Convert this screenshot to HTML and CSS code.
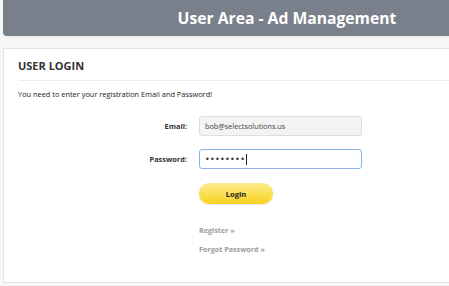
FILE: index.html
```html
<!DOCTYPE html>
<html lang="en">
<head>
  <meta charset="UTF-8">
  <title>User Area - Ad Management</title>
  <link rel="stylesheet" href="styles.css">
</head>
<body>
  <div class="header">
    <h1 class="header__title">User Area - Ad Management</h1>
  </div>

  <div class="panel">
    <h2 class="panel__title">USER LOGIN</h2>
    <p class="panel__info">You need to enter your registration Email and Password!</p>

    <form class="login">
      <label class="login__label" for="email">Email:</label>
      <input class="login__input" id="email" type="text" value="bob@selectsolutions.us">

      <label class="login__label" for="password">Password:</label>
      <div class="login__input login__input--focus">
        <span class="login__dots">&bull;&bull;&bull;&bull;&bull;&bull;&bull;&bull;</span><span class="login__caret"></span>
      </div>

      <span></span>
      <div class="login__actions">
        <button type="button" class="login__button">Login</button>
        <a href="#" class="login__link login__link--first">Register &raquo;</a>
        <a href="#" class="login__link">Forgot Password &raquo;</a>
      </div>
    </form>
  </div>
</body>
</html>
```

FILE: styles.css
```css
html {
  box-sizing: border-box;
  background: #f7f7f7;
}

*, *:before, *:after {
  box-sizing: inherit;
}

body {
  margin: 0;
  font-family: 'Open Sans', 'Liberation Sans', sans-serif;
  color: #333;
  overflow: hidden;
}

.header {
  margin-left: 3px;
  height: 36px;
  background: #7a808b;
  border-bottom-left-radius: 4px;
  box-shadow: 0 1px 2px rgba(0,0,0,0.08);
  display: flex;
  align-items: center;
  justify-content: center;
  padding-left: 122px;
}

.header__title {
  margin: 0;
  color: #fff;
  font-size: 15.7px;
  font-weight: 700;
  white-space: nowrap;
}

.panel {
  margin: 12px -10px 0 3px;
  background: #fff;
  border: 1px solid #e4e4e4;
  padding: 9px 0 27px 14px;
  height: 235px;
}

.panel__title {
  margin: 0;
  font-size: 11px;
  line-height: 16px;
  font-weight: 700;
  color: #333;
  padding-bottom: 6px;
  border-bottom: 1px solid #ececec;
}

.panel__info {
  margin: 8px 0 0;
  font-size: 7.4px;
  line-height: 10px;
  color: #222;
}

.login {
  margin-top: 17px;
  display: grid;
  grid-template-columns: 169px 163px;
  column-gap: 12px;
  row-gap: 13px;
  align-items: center;
}

.login__label {
  text-align: right;
  font-size: 7.4px;
  font-weight: 700;
  color: #333;
}

.login__input {
  height: 20px;
  border: 1px solid #dedede;
  border-radius: 3px;
  background: #f3f3f3;
  padding: 0 5px;
  font-family: inherit;
  font-size: 7.3px;
  color: #444;
  outline: 0;
}

.login__input--focus {
  background: #fff;
  border-color: #8fb3e6;
  display: flex;
  align-items: center;
}

.login__dots {
  font-size: 8px;
  letter-spacing: 0.3px;
  color: #333;
  font-family: 'DejaVu Sans', sans-serif;
}

.login__caret {
  width: 1px;
  height: 11px;
  background: #222;
  margin-left: 1px;
}

.login__actions {
  display: flex;
  flex-direction: column;
  align-items: flex-start;
  margin-top: 1px;
}

.login__button {
  width: 74px;
  height: 21px;
  border: 0;
  border-radius: 10px;
  background: linear-gradient(#fdea8c 0%, #fbe05a 45%, #f6d11f 100%);
  box-shadow: 0 1px 1px rgba(0,0,0,0.08);
  font-family: inherit;
  font-size: 7.6px;
  font-weight: 700;
  color: #222;
  cursor: pointer;
  padding: 0;
}

.login__link {
  font-size: 7.2px;
  line-height: 12px;
  font-weight: 700;
  color: #9c9c9c;
  text-decoration: none;
  margin-top: 7px;
}

.login__link--first {
  margin-top: 20px;
}
```
